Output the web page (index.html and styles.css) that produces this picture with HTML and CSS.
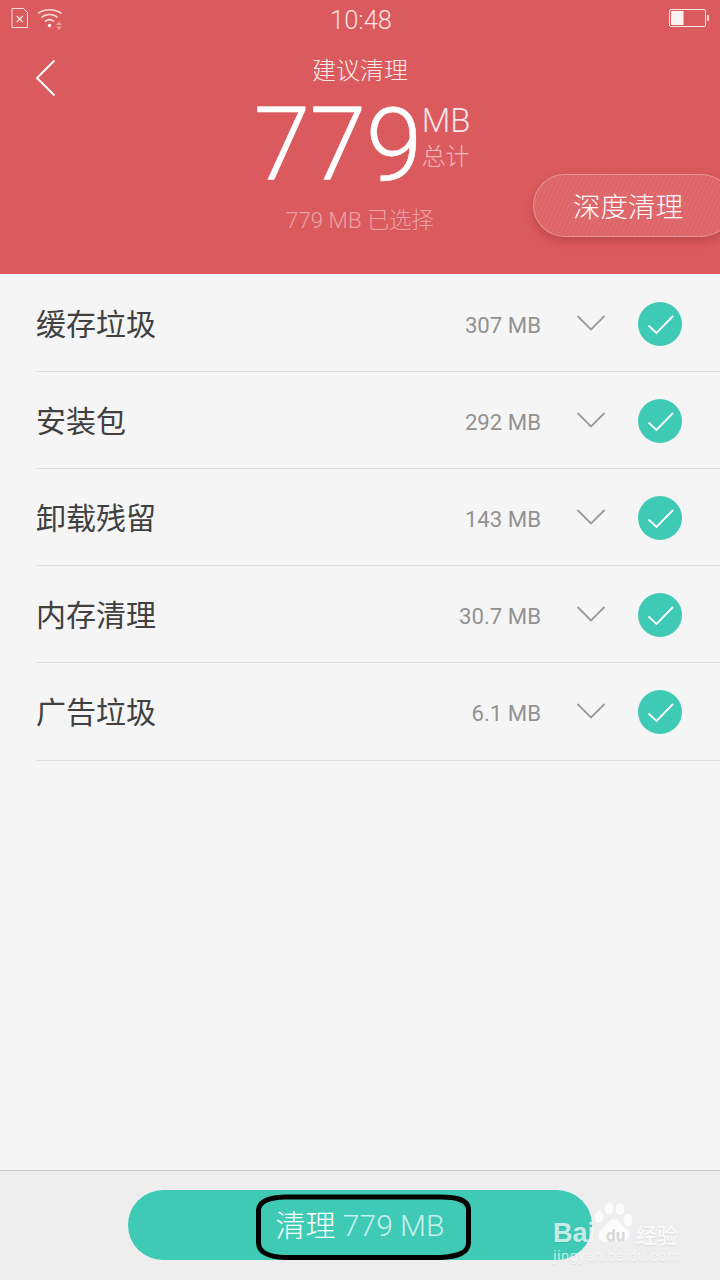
FILE: index.html
```html
<!DOCTYPE html>
<html lang="zh">
<head>
<meta charset="utf-8">
<title>建议清理</title>
<link rel="stylesheet" href="styles.css">
</head>
<body>
<div class="app">
  <header class="hero">
    <div class="status">
      <div class="status-left">
        <svg class="sim" width="18" height="21" viewBox="0 0 18 21"><path d="M1 .5H12.500L16.500 4.500V19.500H1Z" fill="none" stroke="#fff" stroke-opacity=".8" stroke-width="1"/><path d="M5.800 8L11.800 14M11.800 8L5.800 14" stroke="#fff" stroke-opacity=".85" stroke-width="1.200"/></svg>
        <svg class="wifi" width="26" height="22" viewBox="0 0 26 22"><g fill="none" stroke="#fff" stroke-opacity=".8" stroke-width="1.600"><path d="M1 5.500C7 .5 18 .5 24.500 5.500"/><path d="M4.500 9.500C9 5.500 16 5.500 20.500 9.500"/><path d="M8 13.300C11 11 14 11 17 13.300"/></g><circle cx="12.500" cy="17.500" r="1.700" fill="#fff" fill-opacity=".9"/><path d="M19 17H25L22 13.500ZM19 18.500H25L22 22Z" fill="#fff" fill-opacity=".4"/></svg>
      </div>
      <div class="clock">10:48</div>
      <svg class="battery" width="40" height="20" viewBox="0 0 40 20"><rect x=".5" y=".5" width="36" height="17" rx="1.500" fill="none" stroke="#fff" stroke-opacity=".85"/><rect x="2" y="2" width="12.500" height="14" fill="#fff" fill-opacity=".92"/><rect x="38" y="6" width="2" height="6" fill="#fff" fill-opacity=".7"/></svg>
    </div>
    <svg class="back" width="22" height="38" viewBox="0 0 22 38"><path d="M19.500 1.500L2 19L19.500 36.500" fill="none" stroke="#fff" stroke-width="2"/></svg>
    <div class="title">建议清理</div>
    <div class="total">
      <span class="total-num">779</span>
      <div class="total-side">
        <span class="total-unit">MB</span>
        <span class="total-label">总计</span>
      </div>
    </div>
    <div class="selected">779 MB 已选择</div>
    <button class="deep">深度清理</button>
  </header>

  <main class="list">
    <div class="row">
      <span class="row-name">缓存垃圾</span><span class="row-size">307 MB</span>
      <svg class="chev" width="30" height="18" viewBox="0 0 30 18"><path d="M1.500 2L15 15.500L28.500 2" fill="none" stroke="#9a9a9a" stroke-width="1.800"/></svg>
      <span class="check"><svg width="44" height="44" viewBox="0 0 44 44"><path d="M10.500 23.500L18.500 31L35 14" fill="none" stroke="#fff" stroke-width="1.800"/></svg></span>
    </div>
    <div class="row">
      <span class="row-name">安装包</span><span class="row-size">292 MB</span>
      <svg class="chev" width="30" height="18" viewBox="0 0 30 18"><path d="M1.500 2L15 15.500L28.500 2" fill="none" stroke="#9a9a9a" stroke-width="1.800"/></svg>
      <span class="check"><svg width="44" height="44" viewBox="0 0 44 44"><path d="M10.500 23.500L18.500 31L35 14" fill="none" stroke="#fff" stroke-width="1.800"/></svg></span>
    </div>
    <div class="row">
      <span class="row-name">卸载残留</span><span class="row-size">143 MB</span>
      <svg class="chev" width="30" height="18" viewBox="0 0 30 18"><path d="M1.500 2L15 15.500L28.500 2" fill="none" stroke="#9a9a9a" stroke-width="1.800"/></svg>
      <span class="check"><svg width="44" height="44" viewBox="0 0 44 44"><path d="M10.500 23.500L18.500 31L35 14" fill="none" stroke="#fff" stroke-width="1.800"/></svg></span>
    </div>
    <div class="row">
      <span class="row-name">内存清理</span><span class="row-size">30.7 MB</span>
      <svg class="chev" width="30" height="18" viewBox="0 0 30 18"><path d="M1.500 2L15 15.500L28.500 2" fill="none" stroke="#9a9a9a" stroke-width="1.800"/></svg>
      <span class="check"><svg width="44" height="44" viewBox="0 0 44 44"><path d="M10.500 23.500L18.500 31L35 14" fill="none" stroke="#fff" stroke-width="1.800"/></svg></span>
    </div>
    <div class="row">
      <span class="row-name">广告垃圾</span><span class="row-size">6.1 MB</span>
      <svg class="chev" width="30" height="18" viewBox="0 0 30 18"><path d="M1.500 2L15 15.500L28.500 2" fill="none" stroke="#9a9a9a" stroke-width="1.800"/></svg>
      <span class="check"><svg width="44" height="44" viewBox="0 0 44 44"><path d="M10.500 23.500L18.500 31L35 14" fill="none" stroke="#fff" stroke-width="1.800"/></svg></span>
    </div>
  </main>

  <footer class="bottom">
    <button class="clean"><span class="clean-word">清理</span> <span class="clean-size">779 MB</span></button>
    <svg class="scribble" width="218" height="68" viewBox="0 0 218 68"><path d="M30 4H185C203 4 213 7 213.500 16V50C213 60 203 63.500 185 64.500H30C14 64 4 60 3.500 50V17C4 8 14 4.500 30 4Z" fill="none" stroke="#000" stroke-width="5"/></svg>
    <div class="mark">
      <svg class="paw" width="40" height="42" viewBox="0 0 40 42"><g fill="#fff" fill-opacity=".8"><ellipse cx="5" cy="15" rx="4.500" ry="6"/><ellipse cx="15" cy="6.500" rx="4.500" ry="6"/><ellipse cx="26" cy="7" rx="4.500" ry="6"/><ellipse cx="34" cy="18" rx="4.500" ry="6"/><path d="M20 17C26 17 27 24 33 27C38 32 34 41 28 40C24 39 16 39 12 40C6 41 2 33 7 28C13 24 14 17 20 17Z"/></g></svg>
      <span class="mark-bai">Bai</span><span class="mark-du">du</span><span class="mark-jy">经验</span>
      <span class="mark-url">jingyan.baidu.com</span>
    </div>
  </footer>
</div>
</body>
</html>
```
FILE: styles.css
```css
* { box-sizing: border-box; }
html, body { margin: 0; padding: 0; }
body {
  width: 720px;
  height: 1280px;
  overflow: hidden;
  font-family: Roboto, "Noto Sans CJK SC", sans-serif;
  font-weight: 300;
  background: #f5f5f5;
}
.app { display: flex; flex-direction: column; height: 1280px; }

.hero {
  position: relative;
  height: 274px;
  flex: none;
  background: #db5a5e;
  color: #fff;
  display: flex;
  flex-direction: column;
  align-items: center;
}
.status {
  width: 100%;
  height: 40px;
  padding: 8px 12px 0 11px;
  display: flex;
  align-items: flex-start;
  justify-content: space-between;
}
.status-left { display: flex; gap: 8px; width: 150px; align-items: flex-start; }
.sim, .wifi, .battery { display: block; }
.clock {
  font-family: Roboto, sans-serif;
  font-size: 25.500px;
  line-height: 24px;
  color: rgba(255,255,255,.85);
}
.battery { margin-left: 108px; margin-right: -1px; margin-top: 1px; }
.back { position: absolute; left: 35px; top: 59px; }
.title { font-size: 24px; line-height: 34px; margin-top: 14px; color: rgba(255,255,255,.9); }
.total { display: flex; align-items: flex-start; height: 112px; padding-left: 4px; }
.total-num {
  font-family: Roboto, sans-serif;
  font-size: 102px;
  line-height: 112px;
  letter-spacing: -.5px;
  -webkit-text-stroke: .5px #fff;
  padding-top: 1px;
}
.total-side { display: flex; flex-direction: column; }
.total-unit { font-size: 33px; line-height: 38px; margin-top: 14px; color: rgba(255,255,255,.85); }
.total-label { font-size: 24px; line-height: 30px; margin-top: 2px; color: rgba(255,255,255,.6); }
.selected { font-size: 22.300px; line-height: 30px; margin-top: 5px; color: rgba(255,255,255,.45); }
.deep {
  position: absolute;
  left: 533px;
  top: 174px;
  width: 200px;
  height: 63px;
  padding: 0 0 0 39px;
  text-align: left;
  border: 1px solid rgba(255,255,255,.3);
  border-radius: 32px;
  background: repeating-linear-gradient(115deg, rgba(255,255,255,.13) 0 1px, rgba(255,255,255,.07) 1px 4px), #db5a5e;
  box-shadow: 0 4px 8px rgba(120,30,30,.3);
  color: #fff;
  font: 300 27.500px/1 "Noto Sans CJK SC", sans-serif;
}

.list { flex: 1; padding: 1px 0 0 36px; }
.row {
  height: 97px;
  border-bottom: 1px solid #dfdfdf;
  display: flex;
  align-items: center;
  padding: 2px 38px 0 0;
}
.row:last-child { height: 98px; padding-bottom: 1px; }
.row-name { flex: 1; font-size: 30px; color: #404040; font-weight: 400; margin-top: -4px; }
.row-size { font-family: Roboto, sans-serif; font-size: 22.200px; font-weight: 400; color: #929292; margin-top: 2px; }
.chev { margin-left: 35px; margin-top: -2px; display: block; }
.check {
  width: 44px;
  height: 44px;
  margin-left: 32px;
  border-radius: 50%;
  background: #3fcab6;
  display: block;
}
.check svg { display: block; }

.bottom {
  position: relative;
  height: 110px;
  flex: none;
  background: #eeeeee;
  border-top: 1px solid #c9c9c9;
  padding: 19px 0 0 128px;
}
.clean {
  display: block;
  width: 464px;
  height: 70px;
  border: 0;
  padding: 2px 0 0;
  border-radius: 35px;
  background: #3fcab6;
  color: #fff;
  font: 300 30px/68px Roboto, "Noto Sans CJK SC", sans-serif;
}
.clean-size { color: rgba(255,255,255,.72); }
.scribble { position: absolute; left: 255px; top: 22px; }
.mark {
  position: absolute;
  left: 552px;
  top: 29px;
  width: 140px;
  height: 80px;
  color: rgba(255,255,255,.72);
  text-shadow: 0 1px 1px rgba(0,0,0,.08);
}
.paw { position: absolute; left: 42px; top: 2px; }
.mark-bai { position: absolute; left: 1px; top: 17px; font: 700 27px/32px "Liberation Sans", sans-serif; }
.mark-du { position: absolute; left: 54px; top: 26px; font: 700 16px/20px "Liberation Sans", sans-serif; color: #d8d8d8; }
.mark-jy { position: absolute; left: 84px; top: 19px; font: 500 21px/30px "Noto Sans CJK SC", sans-serif; color: rgba(255,255,255,.85); }
.mark-url { position: absolute; left: 1px; top: 46px; font: 400 15px/20px Roboto, sans-serif; letter-spacing: .35px; white-space: nowrap; }
```
